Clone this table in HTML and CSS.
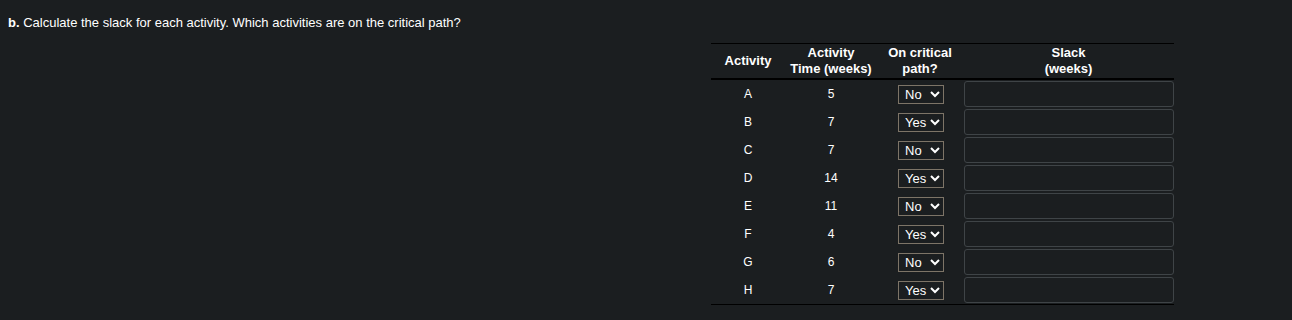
FILE: index.html
```html
<!DOCTYPE html>
<html lang="en">
<head>
    <meta charset="UTF-8">
    <meta name="viewport" content="width=device-width, initial-scale=1.0">
    <title>Critical Path - Slack</title>
    <link rel="stylesheet" href="styles.css">
</head>
<body>

<p class="question"><b>b.</b> Calculate the slack for each activity. Which activities are on the critical path?</p>

<table class="activity-table">
    <thead>
        <tr>
            <th class="col-act">Activity</th>
            <th class="col-time">Activity<br>Time (weeks)</th>
            <th class="col-crit">On critical<br>path?</th>
            <th class="col-slack">Slack<br>(weeks)</th>
        </tr>
    </thead>
    <tbody>
        <tr>
            <td>A</td><td>5</td>
            <td class="crit"><select><option selected>No</option><option>Yes</option></select></td>
            <td><input type="text" class="slack-input"></td>
        </tr>
        <tr>
            <td>B</td><td>7</td>
            <td class="crit"><select><option>No</option><option selected>Yes</option></select></td>
            <td><input type="text" class="slack-input"></td>
        </tr>
        <tr>
            <td>C</td><td>7</td>
            <td class="crit"><select><option selected>No</option><option>Yes</option></select></td>
            <td><input type="text" class="slack-input"></td>
        </tr>
        <tr>
            <td>D</td><td>14</td>
            <td class="crit"><select><option>No</option><option selected>Yes</option></select></td>
            <td><input type="text" class="slack-input"></td>
        </tr>
        <tr>
            <td>E</td><td>11</td>
            <td class="crit"><select><option selected>No</option><option>Yes</option></select></td>
            <td><input type="text" class="slack-input"></td>
        </tr>
        <tr>
            <td>F</td><td>4</td>
            <td class="crit"><select><option>No</option><option selected>Yes</option></select></td>
            <td><input type="text" class="slack-input"></td>
        </tr>
        <tr>
            <td>G</td><td>6</td>
            <td class="crit"><select><option selected>No</option><option>Yes</option></select></td>
            <td><input type="text" class="slack-input"></td>
        </tr>
        <tr>
            <td>H</td><td>7</td>
            <td class="crit"><select><option>No</option><option selected>Yes</option></select></td>
            <td><input type="text" class="slack-input"></td>
        </tr>
    </tbody>
</table>

</body>
</html>
```

FILE: styles.css
```css
/* Page */
body {
    margin: 8px;
    background-color: #1b1e20;
    color: #fff;
    font-family: "Liberation Sans", Arial, sans-serif;
    font-size: 13px;
}

.question {
    margin: 0;
    padding-top: 7px;
    line-height: 15px;
}

/* Activity table */
.activity-table {
    margin: 13px 0 0 703px;
    border-collapse: collapse;
    border-top: 1px solid #000;
    border-bottom: 1px solid #000;
    table-layout: fixed;
}

.activity-table th {
    font-weight: bold;
    font-size: 13px;
    line-height: 16px;
    padding: 1px 0;
    height: 32px;
    border-bottom: 2px solid #000;
    text-align: center;
}

.col-act { width: 74px; }
.col-time { width: 92px; }
.col-crit { width: 86px; }
.col-slack { width: 211px; }

.activity-table td {
    height: 28px;
    padding: 0;
    text-align: center;
    font-size: 12px;
}

.activity-table td.crit {
    padding-left: 2px;
}

select {
    width: 46px;
    height: 19px;
    padding: 0 0 0 2px;
    border: 1px solid #7d7467;
    border-radius: 0;
    background-color: #1b1e20;
    color: #fff;
    color-scheme: dark;
    font-family: "Liberation Sans", Arial, sans-serif;
    font-size: 13px;
    vertical-align: middle;
}

.slack-input {
    display: block;
    box-sizing: border-box;
    width: 210px;
    height: 26px;
    margin: 0 0 0 auto;
    border: 1px solid #3f4447;
    border-radius: 3px;
    background-color: #1b1e20;
    color: #fff;
}
```
